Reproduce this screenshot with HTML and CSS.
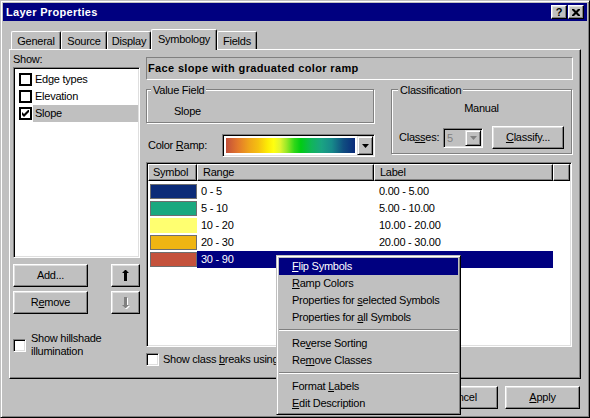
FILE: index.html
```html
<!DOCTYPE html>
<html>
<head>
<meta charset="utf-8">
<title>Layer Properties</title>
<link rel="stylesheet" href="styles.css">
</head>
<body>
<div class="window">
  <div class="titlebar">
    <span class="title-text">Layer Properties</span>
    <div class="title-buttons">
      <span class="tbtn tbtn-help">?</span>
      <span class="tbtn tbtn-close"><svg width="8" height="7" viewBox="0 0 8 7"><path d="M0 0h2l2 2l2-2h2v1l-2.5 2.5l2.5 2.5v1h-2l-2-2l-2 2h-2v-1l2.5-2.5l-2.5-2.5z" fill="#000"/></svg></span>
    </div>
  </div>

  <div class="tabs">
    <div class="tab tab-general">General</div>
    <div class="tab tab-source">Source</div>
    <div class="tab tab-display">Display</div>
    <div class="tab tab-symbology active">Symbology</div>
    <div class="tab tab-fields">Fields</div>
  </div>

  <div class="panel">
    <div class="left-col">
      <div class="show-label">Show:</div>
      <div class="listbox">
        <div class="list-row"><span class="cb flat"></span><span class="list-label">Edge types</span></div>
        <div class="list-row"><span class="cb flat"></span><span class="list-label">Elevation</span></div>
        <div class="list-row"><span class="cb flat"><svg width="7" height="7" viewBox="0 0 7 7"><path d="M0 2L2 4L6 0L7 0L7 2L2 7L0 5Z" fill="#000"/></svg></span><span class="list-label selected">Slope</span></div>
      </div>
      <div class="btn-grid">
        <button class="btn">Add...</button>
        <button class="btn"><svg width="7" height="11" viewBox="0 0 7 11"><path d="M3 0H4L7 3H5V11H2V3H0Z" fill="#000"/></svg></button>
        <button class="btn">R<u>e</u>move</button>
        <button class="btn"><svg width="8" height="12" viewBox="0 0 8 12"><path d="M3 1H6V9H8L5 12H4L1 9H3Z" fill="#fff"/><path d="M2 0H5V8H7L4 11H3L0 8H2Z" fill="#808080"/></svg></button>
      </div>
      <div class="check-row hillshade"><span class="cb"></span><span class="check-text">Show hillshade illumination</span></div>
    </div>

    <div class="right-col">
      <div class="title-box">Face slope with graduated color ramp</div>
      <div class="mid">
        <div class="mid-left">
          <div class="group group-value">
            <div class="group-label">Value Field</div>
            <div class="value-text">Slope</div>
          </div>
          <div class="ramp-row">
            <span class="ramp-label">Color <u>R</u>amp:</span>
            <div class="combo ramp-combo">
              <div class="ramp-area"><div class="ramp"></div></div>
              <span class="drop"><svg width="7" height="4" viewBox="0 0 7 4"><path d="M0 0H7L3.5 4Z" fill="#000"/></svg></span>
            </div>
          </div>
        </div>
        <div class="group group-class">
          <div class="group-label">Classification</div>
          <div class="manual">Manual</div>
          <div class="classes-row">
            <span class="classes-label">Cla<u>ss</u>es:</span>
            <div class="combo combo-disabled">
              <span class="combo-value">5</span>
              <span class="drop"><svg width="7" height="4" viewBox="0 0 7 4"><path d="M0 0H7L3.5 4Z" fill="#808080"/></svg></span>
            </div>
            <button class="btn classify"><u>C</u>lassify...</button>
          </div>
        </div>
      </div>

      <div class="table">
        <div class="thead">
          <div class="th th-sym">Symbol</div>
          <div class="th th-rng">Range</div>
          <div class="th th-lbl">Label</div>
          <div class="th th-fill"></div>
        </div>
        <div class="tbody">
          <div class="row"><div class="sym"><div class="swatch sw1"></div></div><div class="rng">0 - 5</div><div class="lbl">0.00 - 5.00</div></div>
          <div class="row"><div class="sym"><div class="swatch sw2"></div></div><div class="rng">5 - 10</div><div class="lbl">5.00 - 10.00</div></div>
          <div class="row"><div class="sym"><div class="swatch sw3"></div></div><div class="rng">10 - 20</div><div class="lbl">10.00 - 20.00</div></div>
          <div class="row"><div class="sym"><div class="swatch sw4"></div></div><div class="rng">20 - 30</div><div class="lbl">20.00 - 30.00</div></div>
          <div class="row selected"><div class="sym"><div class="swatch sw5"></div></div><div class="rng">30 - 90</div><div class="lbl"></div></div>
        </div>
      </div>

      <div class="check-row breaks"><span class="cb"></span><span class="check-text">Show class <u>b</u>reaks using cell values</span></div>
    </div>
  </div>

  <div class="footer">
    <button class="btn foot-btn">OK</button>
    <button class="btn foot-btn">Cancel</button>
    <button class="btn foot-btn"><u>A</u>pply</button>
  </div>

  <div class="menu">
    <div class="menu-item hl"><u>F</u>lip Symbols</div>
    <div class="menu-item"><u>R</u>amp Colors</div>
    <div class="menu-item">Properties for <u>s</u>elected Symbols</div>
    <div class="menu-item">Properties for <u>a</u>ll Symbols</div>
    <div class="menu-sep"></div>
    <div class="menu-item">Re<u>v</u>erse Sorting</div>
    <div class="menu-item">Re<u>m</u>ove Classes</div>
    <div class="menu-sep"></div>
    <div class="menu-item">Format <u>L</u>abels</div>
    <div class="menu-item"><u>E</u>dit Description</div>
  </div>
</div>
</body>
</html>
```

FILE: styles.css
```css
* { box-sizing: border-box; }

body {
  margin: 0;
  background: #c0c0c0;
  font-family: "Liberation Sans", Arial, sans-serif;
  font-size: 11px;
  line-height: 13px;
  letter-spacing: -0.25px;
  color: #000;
}

u { text-decoration: underline; text-underline-offset: 1px; }

.window {
  position: relative;
  width: 590px;
  height: 418px;
  background: #c0c0c0;
  border: 1px solid;
  border-color: #c0c0c0 #000 #000 #c0c0c0;
  box-shadow: inset 1px 1px #fff, inset -1px -1px #808080;
  padding: 2px;
  display: flex;
  flex-direction: column;
  overflow: hidden;
}

/* title bar */
.titlebar {
  height: 18px;
  flex: none;
  background: #000080;
  color: #fff;
  display: flex;
  align-items: center;
  justify-content: space-between;
  padding: 0 3px;
}
.title-text { font-weight: bold; letter-spacing: 0.3px; }
.title-buttons { display: flex; gap: 1px; }
.tbtn {
  width: 16px;
  height: 14px;
  background: #c0c0c0;
  border: 1px solid;
  border-color: #fff #000 #000 #fff;
  box-shadow: inset -1px -1px #808080, inset 1px 1px #dfdfdf;
  display: flex;
  align-items: center;
  justify-content: center;
  color: #000;
}
.tbtn-help { font-weight: bold; font-size: 11px; letter-spacing: 0; padding-top: 1px; }

/* tabs */
.tabs {
  display: flex;
  align-items: flex-end;
  height: 20px;
  flex: none;
  margin: 8px 0 0 8px;
  position: relative;
  z-index: 1;
}
.tab {
  height: 18px;
  border: 1px solid;
  border-bottom: 0;
  border-color: #fff #000 #000 #fff;
  box-shadow: inset -1px 0 #808080;
  border-radius: 2px 2px 0 0;
  padding-top: 3px;
  text-align: center;
  background: #c0c0c0;
}
.tab-general { width: 50px; }
.tab-source { width: 46px; }
.tab-display { width: 44px; }
.tab-symbology { width: 66px; }
.tab-fields { width: 40px; }
.tab.active {
  height: 21px;
  margin-bottom: -1px;
  position: relative;
  z-index: 2;
}

/* panel */
.panel {
  height: 330px;
  flex: none;
  margin: 0 6px;
  border: 1px solid;
  border-color: #fff #000 #000 #fff;
  box-shadow: inset -1px -1px #808080;
  padding: 3px 7px 0 3px;
  display: flex;
  gap: 6px;
}

.left-col { width: 127px; flex: none; display: flex; flex-direction: column; }
.show-label { height: 13px; margin-bottom: 1px; }

.listbox {
  height: 191px;
  flex: none;
  background: #fff;
  border: 1px solid;
  border-color: #808080 #fff #fff #808080;
  box-shadow: inset 1px 1px #000, inset -1px -1px #dfdfdf;
  padding: 3px 1px 1px 1px;
}
.list-row { display: flex; align-items: center; height: 17px; }
.list-row .cb { margin-left: 4px; }
.list-label {
  flex: 1;
  height: 17px;
  line-height: 17px;
  margin-left: 1px;
  padding-left: 2px;
}
.list-label.selected { background: #c0c0c0; }

.cb {
  width: 13px;
  height: 13px;
  flex: none;
  background: #fff;
  border: 1px solid;
  border-color: #808080 #fff #fff #808080;
  box-shadow: inset 1px 1px #000, inset -1px -1px #dfdfdf;
  display: flex;
  align-items: center;
  justify-content: center;
}
.cb.flat {
  border: 1px solid #000;
  box-shadow: inset 0 0 0 1px #000;
}

.btn {
  font: inherit;
  letter-spacing: inherit;
  line-height: 13px;
  color: #000;
  margin: 0;
  padding: 0;
  height: 23px;
  background: #c0c0c0;
  border: 1px solid;
  border-color: #fff #000 #000 #fff;
  box-shadow: inset -1px -1px #808080, inset 1px 1px #dfdfdf;
  display: flex;
  align-items: center;
  justify-content: center;
}

.btn-grid {
  display: grid;
  grid-template-columns: 75px 29px;
  justify-content: space-between;
  row-gap: 4px;
  margin-top: 6px;
}

.check-row { display: flex; align-items: center; }
.hillshade { margin-top: 18px; gap: 5px; }

/* right column */
.right-col { width: 427px; flex: none; display: flex; flex-direction: column; }

.title-box {
  margin-top: 4px;
  height: 23px;
  border: 1px solid;
  border-color: #808080 #fff #fff #808080;
  font-weight: bold;
  letter-spacing: 0.35px;
  line-height: 21px;
  padding-left: 1px;
}

.mid { display: flex; margin-top: 9px; gap: 16px; }
.mid-left { width: 229px; flex: none; }

.group {
  border: 1px solid #808080;
  box-shadow: inset 1px 1px #fff, 1px 1px #fff;
}
.group-label {
  width: max-content;
  margin: -6px 0 0 4px;
  padding: 0 2px;
  background: #c0c0c0;
}
.group-value { width: 228px; height: 34px; }
.value-text { margin: 8px 0 0 27px; }

.ramp-row { display: flex; align-items: center; margin-top: 11px; padding-left: 2px; }
.ramp-label { width: 74px; flex: none; }

.combo {
  border: 1px solid;
  border-color: #808080 #fff #fff #808080;
  box-shadow: inset 1px 1px #000, inset -1px -1px #dfdfdf;
  background: #fff;
  padding: 1px;
  display: flex;
}
.ramp-combo { width: 153px; height: 23px; }
.ramp-area { flex: 1; padding: 2px; }
.ramp {
  height: 100%;
  background: linear-gradient(to right,
    #c24f3a 0%, #e2772c 9%, #efa51a 18%, #f5c010 25%, #fdea05 32%, #ffff10 37%,
    #e0f430 42%, #98e828 47%, #30d818 53%, #00cc14 58%, #10b658 66%,
    #1aa482 74%, #178a8a 82%, #104e80 91%, #0a2a7a 100%);
}
.drop {
  width: 16px;
  flex: none;
  background: #c0c0c0;
  border: 1px solid;
  border-color: #dfdfdf #000 #000 #dfdfdf;
  box-shadow: inset 1px 1px #fff, inset -1px -1px #808080;
  display: flex;
  align-items: center;
  justify-content: center;
}

.group-class { width: 181px; height: 65px; flex: none; }
.group-class .group-label { margin-left: 6px; }
.manual { text-align: center; margin-top: 5px; }
.classes-row { display: flex; align-items: center; margin-top: 11px; padding-left: 7px; height: 23px; }
.classes-label { width: 44px; flex: none; }
.combo-disabled { width: 40px; height: 20px; background: #c0c0c0; }
.combo-value { flex: 1; color: #808080; padding-left: 2px; line-height: 16px; }
.classify { width: 72px; margin-left: 9px; }

/* table */
.table {
  margin-top: 5px;
  width: 426px;
  height: 185px;
  background: #fff;
  border: 1px solid;
  border-color: #808080 #fff #fff #808080;
  box-shadow: inset 1px 1px #000, inset -1px -1px #dfdfdf;
  padding: 1px;
}
.thead { display: flex; height: 17px; }
.th {
  height: 17px;
  background: #c0c0c0;
  border: 1px solid;
  border-color: #fff #000 #000 #fff;
  box-shadow: inset -1px -1px #808080;
  padding-left: 5px;
  line-height: 15px;
}
.th-sym { width: 49px; padding-left: 4px; }
.th-rng { width: 177px; }
.th-lbl { width: 179px; }
.th-fill { width: 17px; }

.tbody { padding-top: 2px; }
.row { display: flex; height: 17px; }
.sym { width: 49px; padding: 1px 0 0 2px; }
.swatch { width: 47px; height: 15px; border: 1px solid #6e6e6e; }
.sw1 { background: #0c2b78; }
.sw2 { background: #1aa87f; }
.sw3 { background: #ffff70; border-color: #ffff70; }
.sw4 { background: #efb512; }
.sw5 { background: #c4523c; }
.rng, .lbl { width: 178px; padding-left: 4px; line-height: 17px; }
.row.selected .rng, .row.selected .lbl { background: #000080; color: #fff; }

.breaks { margin-top: 6px; gap: 4px; }

/* footer */
.footer {
  display: flex;
  justify-content: flex-end;
  gap: 7px;
  margin-top: 7px;
  padding-right: 7px;
}
.foot-btn { width: 75px; }

/* context menu */
.menu {
  position: absolute;
  left: 275px;
  top: 254px;
  width: 185px;
  background: #c0c0c0;
  border: 1px solid;
  border-color: #c0c0c0 #000 #000 #c0c0c0;
  box-shadow: inset 1px 1px #fff, inset -1px -1px #808080;
  padding: 2px;
  z-index: 10;
}
.menu-item {
  height: 17px;
  line-height: 17px;
  padding-left: 13px;
  white-space: nowrap;
}
.menu-item.hl { background: #000080; color: #fff; }
.menu-sep {
  height: 2px;
  margin: 3px 0 4px;
  border-top: 1px solid #808080;
  border-bottom: 1px solid #fff;
}
```
